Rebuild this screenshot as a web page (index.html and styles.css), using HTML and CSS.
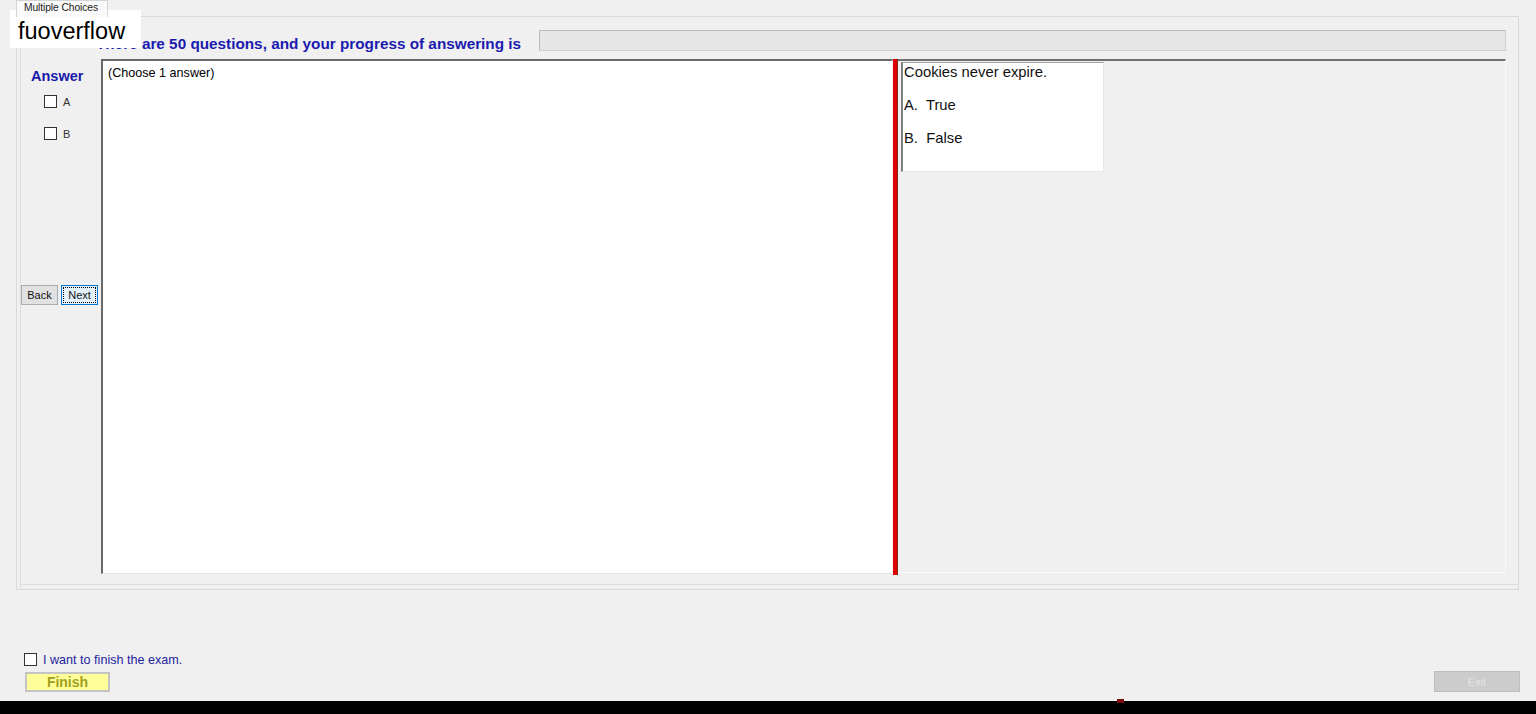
FILE: index.html
```html
<!DOCTYPE html>
<html>
<head>
<meta charset="utf-8">
<link rel="stylesheet" href="styles.css">
</head>
<body>
<div class="page">
  <div class="tabstrip"><div class="tab">Multiple Choices</div></div>
  <div class="tabpanel">
    <div class="header">
      <div class="title">There are 50 questions, and your progress of answering is</div>
      <div class="progress"></div>
    </div>
    <div class="main">
      <div class="leftcol">
        <div class="answer">Answer</div>
        <label class="opt"><span class="cb"></span><span>A</span></label>
        <label class="opt"><span class="cb"></span><span>B</span></label>
        <div class="nav">
          <button class="btn">Back</button>
          <button class="btn next">Next</button>
        </div>
      </div>
      <div class="textbox">(Choose 1 answer)</div>
      <div class="splitter"></div>
      <div class="rightpanel">
        <div class="qbox">
          <div class="qline">Cookies never expire.</div>
          <div class="qline">A.&nbsp; True</div>
          <div class="qline">B.&nbsp; False</div>
        </div>
      </div>
    </div>
  </div>
  <div class="bottom">
    <div class="finishcol">
      <label class="finishopt"><span class="cb"></span><span>I want to finish the exam.</span></label>
      <button class="finish">Finish</button>
    </div>
    <button class="exit">Exit</button>
  </div>
  <div class="footer"><span class="mark"></span></div>
  <div class="watermark">fuoverflow</div>
</div>
</body>
</html>
```
FILE: styles.css
```css
* { box-sizing: border-box; }
html, body { margin: 0; padding: 0; }
body {
  background: #f0f0f0;
  font-family: "Liberation Sans", Arial, sans-serif;
  color: #000;
  width: 1536px;
  height: 714px;
  overflow: hidden;
}
.page { position: relative; width: 1536px; height: 714px; display: flex; flex-direction: column; }
.page > * { flex: none; }
.tabstrip { height: 16px; padding-left: 16px; display: flex; align-items: flex-end; }
.tab {
  width: 92px;
  height: 17px;
  padding: 0 0 0 7px;
  font-size: 10.3px;
  letter-spacing: -0.1px;
  line-height: 13px;
  color: #222;
  background: #fafafa;
  border: 1px solid #d4d4d4;
  border-bottom: none;
  margin-bottom: -1px;
  position: relative;
  z-index: 1;
  white-space: nowrap;
}
.tabpanel {
  margin: 0 17px 0 16px;
  height: 574px;
  border: 1px solid #dadada;
  box-shadow: inset 3px 0 0 #f0f0f0, inset 4px 0 0 #dcdcdc, inset 0 -4px 0 #f0f0f0, inset 0 -5px 0 #dcdcdc;
  padding: 13px 12px 0 3px;
}
.header { height: 21px; display: flex; align-items: center; }
.title {
  padding-left: 76px;
  width: 519px;
  font-size: 15.3px;
  font-weight: bold;
  color: #1b1bb0;
  padding-top: 6px;
  white-space: nowrap;
}
.progress {
  flex: 1;
  height: 21px;
  background: #e6e6e6;
  border: 1px solid #bcbcbc;
  border-right-color: #d0d0d0;
  border-bottom-color: #d0d0d0;
}
.main { margin-top: 8px; height: 516px; display: flex; }
.leftcol { width: 81px; display: flex; flex-direction: column; align-items: flex-start; }
.answer { margin-top: 9px; margin-left: 11px; font-size: 14.5px; font-weight: bold; color: #1a1aa8; line-height: 17px; }
.opt {
  display: flex; align-items: center; gap: 6px;
  font-size: 11px; color: #333;
  margin-left: 24px;
}
.opt:nth-of-type(1) { margin-top: 10px; }
.opt + .opt { margin-top: 19px; }
.cb { width: 13px; height: 13px; border: 1px solid #333; background: #fff; display: inline-block; flex: none; }
.nav { margin-top: 145px; display: flex; gap: 3px; margin-left: 1px; }
.btn {
  width: 37px; height: 20px;
  font-family: "Liberation Sans", Arial, sans-serif;
  font-size: 11px; color: #111;
  background: #e1e1e1;
  border: 1px solid #adadad;
  padding: 0;
}
.btn.next { background: #e5f1fb; border: 1px solid #0078d7; outline: 1px dotted #000; outline-offset: -3px; }
.textbox {
  width: 792px;
  height: 515px;
  background: #fff;
  border-left: 2px solid #6a6a6a;
  border-top: 2px solid #6a6a6a;
  border-right: 1px solid #f4f4f4;
  border-bottom: 1px solid #e3e3e3;
  font-size: 12.6px;
  padding: 5px 5px;
}
.splitter {
  width: 5px; height: 516px;
  background: #e00000;
  border-right: 1px solid #7a2a1a;
}
.rightpanel {
  flex: 1;
  height: 514px;
  border-top: 2px solid #707070;
  border-right: 1px solid #fafafa;
  border-bottom: 1px solid #fafafa;
  padding: 1px 0 0 3px;
}
.qbox {
  width: 203px;
  height: 110px;
  background: #fff;
  border-left: 2px solid #808080;
  border-top: 1px solid #a0a0a0;
  border-right: 1px solid #e8e8e8;
  border-bottom: 1px solid #e8e8e8;
  padding: 1px 0 0 1px;
}
.qline { font-size: 14.8px; line-height: 17px; color: #111; height: 33px; }
.bottom {
  margin-top: 62px;
  height: 42px;
  display: flex;
  justify-content: space-between;
  padding: 0 16px 0 24px;
}
.finishcol { display: flex; flex-direction: column; }
.finishopt { display: flex; align-items: center; gap: 6px; font-size: 12.6px; color: #2424a0; height: 14px; }
.finishopt span:last-child { margin-top: 2px; }
.finish {
  margin-top: 6px;
  margin-left: 1px;
  width: 85px; height: 20px;
  background: #ffff99;
  border: 2px solid #c4c4c4;
  font-family: "Liberation Sans", Arial, sans-serif;
  font-size: 14px; font-weight: bold; color: #a0a020;
  padding: 0;
  line-height: 16px;
}
.exit {
  margin-top: 19px;
  width: 86px; height: 21px;
  background: #cccccc;
  border: 1px solid #bdbdbd;
  font-family: "Liberation Sans", Arial, sans-serif;
  font-size: 11px; color: #e4e4e4;
  padding: 0;
}
.footer { margin-top: 7px; height: 13px; background: #000; position: relative; }
.mark { position: absolute; left: 1117px; top: -2px; width: 7px; height: 4px; background: #7a1010; }
.watermark {
  position: absolute;
  left: 10px; top: 10px;
  width: 131px; height: 38px;
  background: #fff;
  font-size: 23.5px;
  line-height: 43px;
  padding-left: 8px;
  color: #000;
}
```
